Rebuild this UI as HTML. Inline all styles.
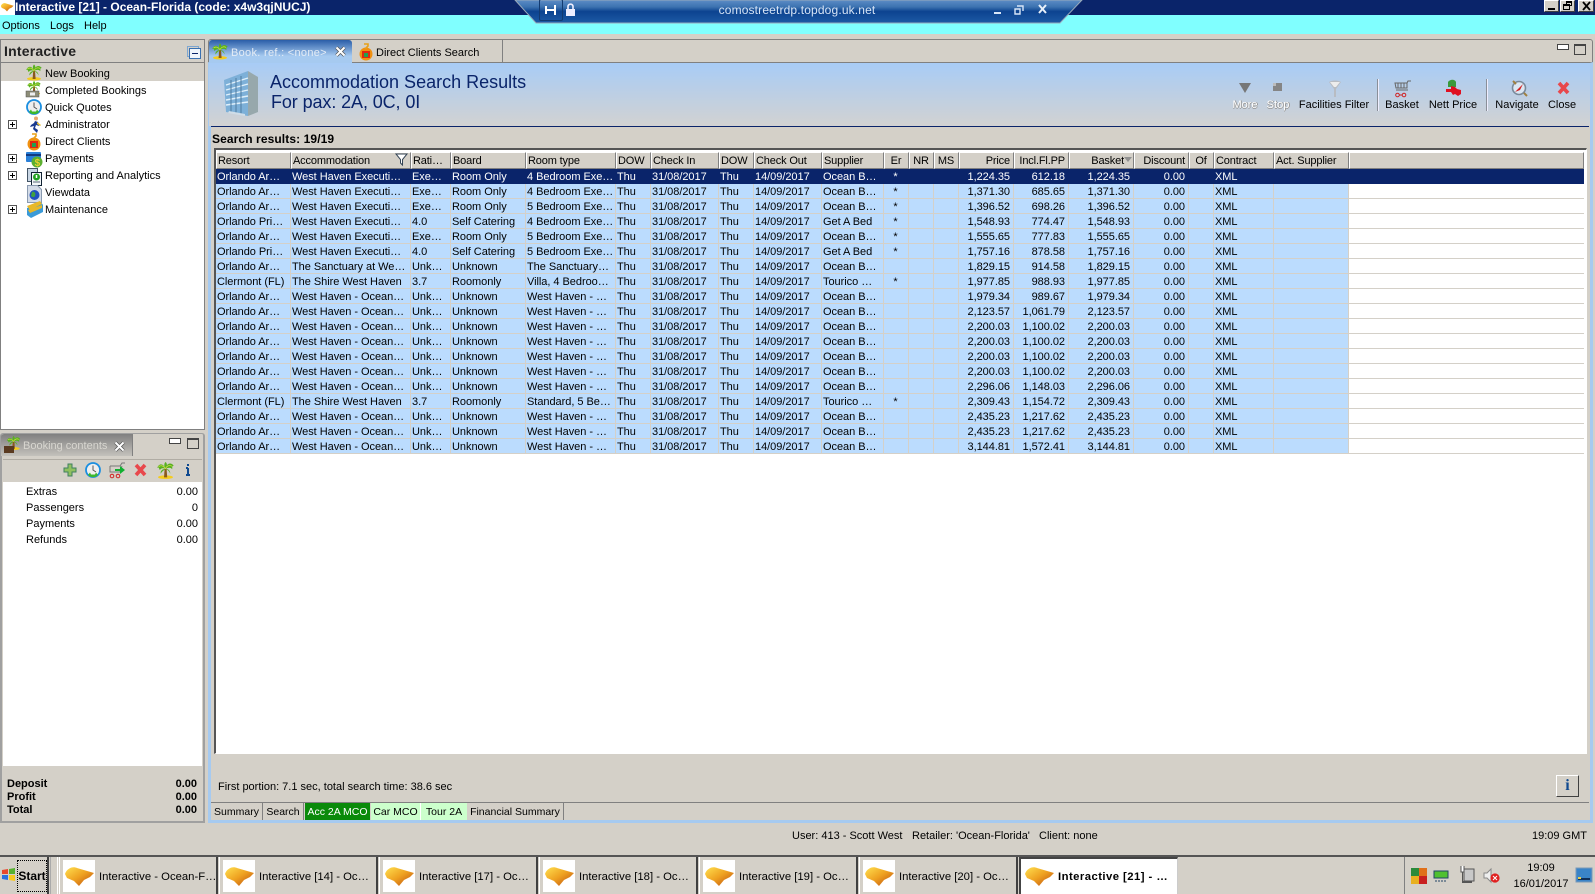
<!DOCTYPE html>
<html lang="en"><head><meta charset="utf-8"><title>Interactive [21] - Ocean-Florida</title>
<style>
html,body{margin:0;padding:0;width:1595px;height:894px;overflow:hidden;background:#d4d0c8}
body{position:relative;font:11px "Liberation Sans",Arial,sans-serif;color:#000}
.a,.t{position:absolute}
.t{white-space:nowrap;line-height:14px}
svg{position:absolute;overflow:visible}
.c{transform:translateX(-50%)}
.r{text-align:right}
table{position:absolute;left:216px;top:152px;border-collapse:separate;border-spacing:0;table-layout:fixed;width:1368px}
th{padding:0 2px 0 1px;background:#d4d0c8;font-weight:normal;text-align:left;border:1px solid;border-color:#fff #808080 #808080 #fff;box-sizing:border-box;height:17px;line-height:14px;overflow:hidden;white-space:nowrap;letter-spacing:-.15px}
td{height:15px;box-sizing:border-box;padding:2px 2px 0 1px;background:#bbdcfe;border-right:1px solid #d4d0c8;border-bottom:1px solid #d4d0c8;line-height:12px;overflow:hidden;white-space:nowrap;letter-spacing:-.04px}
td:last-child{background:#fff;border-right:0}
tr.s td{background:#0a246a!important;color:#fff;border-color:#0a246a}
td:nth-child(n+14):nth-child(-n+17),th:nth-child(n+14):nth-child(-n+17){text-align:right;padding-right:3px}
td:nth-child(11),th:nth-child(11),th:nth-child(12),th:nth-child(13),th:nth-child(18){text-align:center}
.mt{position:absolute;top:803px;height:17px;line-height:18px;text-align:center;border-right:1px solid #808080;box-sizing:border-box;font-size:10.5px}
.tb{position:absolute;top:857px;height:37px;width:159px;background:#d4d0c8;border-right:2px solid #404040;border-left:1px solid #fff;box-sizing:border-box}
.tb .ic{position:absolute;left:3px;top:3px;width:32px;height:32px;background:#fff}
.tb .tx{position:absolute;left:39px;top:13px;line-height:14px;white-space:nowrap;font-size:11.3px}
</style></head><body>
<svg width="0" height="0" style="position:absolute"><defs>
<linearGradient id="gem" x1="0" y1="0" x2="1" y2="1"><stop offset="0" stop-color="#ffe050"/><stop offset=".5" stop-color="#eea020"/><stop offset="1" stop-color="#b84a10"/></linearGradient>
<symbol id="gemi" viewBox="0 0 32 32"><path d="M2 14C4 8 10 6 14 8L31 13 27 17 21 20 16 26 11 21 4 18Z" fill="url(#gem)"/></symbol>
<symbol id="palm" viewBox="0 0 16 16"><ellipse cx="8" cy="14.3" rx="7" ry="1.7" fill="#f4cc20"/><path d="M7.2 6h1.8l.6 8.5H6.6Z" fill="#8a5a1c"/><path d="M8 6.5C6 1 2 1 .2 5.5c2-1 1.5 1 2.5 2C4 5.5 6 5.5 8 6.5ZM8 6.5C9 1 13 0 15.8 3.5c-2 0-1.2 1.5-1.5 3.3C13 5 11 5 8 6.5ZM8 6.5C6.5 4 6.5 1.5 8 0c2 1.5 1.5 4 0 6.5ZM8 6.5C5 6.5 3 8.5 3.5 11c1.5-2.5 3-3 4.5-4.5ZM8 6.5c3 0 4.5 2 4.5 4.5C11.5 8.5 10 7.5 8 6.5Z" fill="#58b020"/><path d="M8 6.5C6 3 3 3 1.5 4.5M8 6.5c1-3 4-4 6-2.5" stroke="#c8e040" stroke-width=".8" fill="none"/></symbol>
<symbol id="clock" viewBox="0 0 16 16"><circle cx="8" cy="8" r="7" fill="#efefef" stroke="#1a8ee0" stroke-width="1.8"/><path d="M8 3.5V8l3 2" stroke="#555" fill="none"/><path d="M3 13a7 7 0 0 0 10 0l-2-2.500-1 2H6L5 10.500Z" fill="#3db82c"/></symbol>
</defs></svg>

<!-- Title bar -->
<div class="a" style="left:0;top:0;width:1595px;height:15px;background:#0a246a"></div>
<div class="a" style="left:0;top:0;width:15px;height:15px;background:#fff"></div>
<svg style="left:0;top:0" width="14" height="14"><use href="#gemi" width="14" height="14"/></svg>
<div class="t" style="left:15px;top:0;color:#fff;font-weight:bold;font-size:12px">Interactive [21] - Ocean-Florida (code: x4w3qjNUCJ)</div>
<div class="a" style="left:0;top:15px;width:1595px;height:19px;background:#80ffff"></div>
<div class="t" style="left:2px;top:19px">Options</div><div class="t" style="left:50px;top:19px">Logs</div><div class="t" style="left:84px;top:19px">Help</div>

<!-- window buttons -->
<div class="a" style="left:1544px;top:0;width:15px;height:12px;background:#d4d0c8;border:1px solid;border-color:#fff #404040 #404040 #fff;box-sizing:border-box"><div class="a" style="left:3px;top:7px;width:7px;height:2px;background:#000"></div></div>
<div class="a" style="left:1560px;top:0;width:15px;height:12px;background:#d4d0c8;border:1px solid;border-color:#fff #404040 #404040 #fff;box-sizing:border-box"><div class="a" style="left:5px;top:0;width:6px;height:5px;border:1px solid #000;border-top-width:2px;box-sizing:border-box"></div><div class="a" style="left:2px;top:3px;width:7px;height:6px;border:1px solid #000;border-top-width:2px;box-sizing:border-box;background:#d4d0c8"></div></div>
<div class="a" style="left:1578px;top:0;width:16px;height:12px;background:#d4d0c8;border:1px solid;border-color:#fff #404040 #404040 #fff;box-sizing:border-box"><svg style="left:3px;top:1px" width="9" height="8"><path d="M1 0L8 8M8 0L1 8" stroke="#000" stroke-width="1.8"/></svg></div>

<!-- RDP bar -->
<svg style="left:512px;top:0" width="572" height="24"><defs><linearGradient id="rdp" x1="0" y1="0" x2="0" y2="1"><stop offset="0" stop-color="#5d8dc6"/><stop offset=".3" stop-color="#3c72b0"/><stop offset=".5" stop-color="#0c4390"/><stop offset="1" stop-color="#1d5aa5"/></linearGradient></defs><path d="M3 0H570L548 23H24Z" fill="url(#rdp)" stroke="#9ab" stroke-width="1"/></svg>
<div class="a" style="left:539px;top:-1px;width:22px;height:20px;border:1px solid #123a70;border-radius:2px"></div>
<svg style="left:539px;top:0" width="60" height="20"><path d="M7 10H16M16 5V15M7 6V14" stroke="#fff" stroke-width="2" fill="none"/><rect x="27" y="9" width="9" height="7" fill="#eef"/><path d="M29 9V6a2.6 2.6 0 0 1 5 0V9" stroke="#eef" stroke-width="1.6" fill="none"/></svg>
<div class="t c" style="left:797px;top:3px;color:#d6e4f6;font-size:12px;letter-spacing:.15px">comostreetrdp.topdog.uk.net</div>
<svg style="left:990px;top:3px" width="66" height="13"><path d="M4 10h7" stroke="#d8e6f8" stroke-width="2"/><path d="M27 3h6v5M25 6h5v5h-5Z" stroke="#d8e6f8" stroke-width="1.4" fill="none"/><path d="M49 2l7 8M56 2l-7 8" stroke="#e8f0fa" stroke-width="2"/></svg>

<!-- Left panel -->
<div class="a" style="left:0;top:39px;width:205px;height:391px;background:#fff;border:1px solid #808080;box-sizing:border-box"></div>
<div class="a" style="left:1px;top:40px;width:203px;height:22px;background:#d4d0c8;border-bottom:1px solid #808080"></div>
<div class="t" style="left:4px;top:43px;font-size:14px;font-weight:bold;color:#222;letter-spacing:.2px;line-height:16px">Interactive</div>
<div class="a" style="left:187px;top:46px;width:10px;height:9px;border:1px solid #7ea6d0"></div>
<div class="a" style="left:189px;top:48px;width:10px;height:9px;border:1px solid #3a70b0;background:#eef4fb"><div class="a" style="left:2px;top:4px;width:6px;height:1px;background:#0a246a"></div></div>
<div class="a" style="left:1px;top:63px;width:203px;height:18px;background:#d4d0c8"></div>
<div class="t" style="left:45px;top:67px">New Booking</div>
<div class="t" style="left:45px;top:84px">Completed Bookings</div>
<div class="t" style="left:45px;top:101px">Quick Quotes</div>
<div class="t" style="left:45px;top:118px">Administrator</div>
<div class="t" style="left:45px;top:135px">Direct Clients</div>
<div class="t" style="left:45px;top:152px">Payments</div>
<div class="t" style="left:45px;top:169px">Reporting and Analytics</div>
<div class="t" style="left:45px;top:186px">Viewdata</div>
<div class="t" style="left:45px;top:203px">Maintenance</div>
<svg style="left:8px;top:120px" width="9" height="94"><g fill="#fff" stroke="#555"><rect x=".5" y=".5" width="8" height="8"/><rect x=".5" y="34.5" width="8" height="8"/><rect x=".5" y="51.5" width="8" height="8"/><rect x=".5" y="85.5" width="8" height="8"/></g><path d="M2 4.5h5M4.5 2v5M2 38.5h5M4.500 36v5M2 55.5h5M4.5 53v5M2 89.5h5M4.5 87v5" stroke="#000"/></svg>
<svg style="left:26px;top:64px" width="16" height="17"><use href="#palm" width="16" height="17"/></svg>
<svg style="left:26px;top:81px" width="16" height="17"><use href="#palm" width="16" height="14"/><rect x="0" y="10" width="13" height="6" fill="#8d8d78" stroke="#555" stroke-width=".5"/><rect x="4" y="11.5" width="5" height="3" fill="#eee"/></svg>
<svg style="left:26px;top:99px" width="16" height="17"><use href="#clock" width="16" height="16"/></svg>
<svg style="left:28px;top:116px" width="14" height="18"><circle cx="8" cy="2.5" r="2" fill="#e8a870"/><path d="M7 5l3 1 1 4-3-1-1 3 3 2-1 3-4-4 1-3-4 1 1-2 3-2Z" fill="#1a3a90"/><path d="M9 6l4 3-1 1-3-2Z" fill="#e8c030"/></svg>
<svg style="left:26px;top:133px" width="16" height="18"><circle cx="8" cy="11" r="6.5" fill="#f09010"/><path d="M4 8h8v7H4Z" fill="#e02810"/><path d="M6 10h4v4H6Z" fill="#20a050"/><path d="M6 1h4v2L8 5V6" stroke="#e8a018" stroke-width="1.6" fill="none"/></svg>
<svg style="left:26px;top:151px" width="17" height="17"><rect x="0" y="1" width="15" height="10" rx="1" fill="#2a80d8"/><rect x="0" y="3" width="15" height="2" fill="#123a80"/><circle cx="11" cy="11" r="5.500" fill="#5cb030"/><text x="8.600" y="15" font-size="10" font-weight="bold" fill="#e8d030" font-family="Liberation Sans">$</text></svg>
<svg style="left:27px;top:168px" width="15" height="18"><rect x=".5" y=".5" width="10" height="13" fill="#c9d6e4" stroke="#456"/><rect x="4.5" y="4.5" width="10" height="13" fill="#f2f6f8" stroke="#123"/><circle cx="9.500" cy="9" r="3.5" fill="#20a020"/><path d="M9.500 7v3" stroke="#fff" stroke-width="1.5"/><path d="M6 14h7" stroke="#567"/></svg>
<svg style="left:27px;top:185px" width="15" height="18"><path d="M.5.5h10l4 4v13H.5Z" fill="#d4dce8" stroke="#8a9ab0"/><circle cx="7.5" cy="10" r="5" fill="#2050c0"/><path d="M5 7c3-1 4 2 3 4s-3 1-4 0Z" fill="#40a040"/></svg>
<svg style="left:27px;top:201px" width="16" height="18"><path d="M0 7L14 1l2 3v7L4 17l-4-3Z" fill="#3a9ad8"/><path d="M0 5L13 0l2 3L3 9ZM1 9L15 4v3L3 12Z" fill="#e8b828"/></svg>

<!-- Booking contents panel -->
<div class="a" style="left:0;top:433px;width:205px;height:390px;border:1px solid #a0a0a0;border-width:1px 2px 2px;box-sizing:border-box;border-radius:3px 3px 0 0"></div>
<div class="a" style="left:1px;top:434px;width:131px;height:22px;background:linear-gradient(#808080,#c4c2bc);border-right:1px solid #808080;border-radius:3px 0 0 0"></div>
<div class="t" style="left:23px;top:439px;color:#d8d6d0">Booking contents</div>
<svg style="left:3px;top:436px" width="18" height="18"><use href="#palm" x="3" width="15" height="14"/><rect x="1" y="10" width="10" height="7" fill="#5a3a20"/></svg>
<svg style="left:114px;top:441px" width="11" height="11"><path d="M1.5 1.5l8 8M9.5 1.5l-8 8" stroke="#555" stroke-width="3.4"/><path d="M1.5 1.5l8 8M9.5 1.5l-8 8" stroke="#fff" stroke-width="2"/></svg>
<div class="a" style="left:169px;top:438px;width:10px;height:4px;border:1px solid #444;background:#fff"></div>
<div class="a" style="left:187px;top:438px;width:10px;height:8px;border:1px solid #444;border-top-width:2px"></div>
<div class="a" style="left:3px;top:459px;width:199px;height:23px;background:#d4d0c8;border-top:1px solid #b0aca4"></div>
<div class="a" style="left:3px;top:482px;width:199px;height:284px;background:#fff"></div>
<svg style="left:63px;top:462px" width="145" height="18"><path d="M5 1h4v4h4v4H9v4H5V9H1V5h4Z" fill="#90c060" stroke="#408060" transform="translate(0 1)"/><use href="#clock" x="22" y="0" width="16" height="16"/><path d="M47 4h10l2-3h3M47 4v6h10l2-6" stroke="#777" fill="none"/><circle cx="49" cy="14" r="1.800" fill="none" stroke="#d02020"/><circle cx="55" cy="14" r="1.8" fill="none" stroke="#d02020"/><path d="M52 7h5V4l5 4-5 4V9h-5Z" fill="#10b030"/><path d="M73 3l9 10M82 3l-9 10" stroke="#e8484c" stroke-width="3.6"/><use href="#palm" x="94" y="0" width="17" height="17"/><path d="M125 2v2M125 6v7M123 13h4M123 6h2" stroke="#104a90" stroke-width="2" fill="none"/></svg>
<div class="t" style="left:26px;top:485px">Extras</div><div class="t r" style="right:1397px;top:485px">0.00</div>
<div class="t" style="left:26px;top:501px">Passengers</div><div class="t r" style="right:1397px;top:501px">0</div>
<div class="t" style="left:26px;top:517px">Payments</div><div class="t r" style="right:1397px;top:517px">0.00</div>
<div class="t" style="left:26px;top:533px">Refunds</div><div class="t r" style="right:1397px;top:533px">0.00</div>
<div class="t" style="left:7px;top:777px;font-weight:bold">Deposit</div><div class="t" style="right:1398px;top:777px;font-weight:bold">0.00</div>
<div class="t" style="left:7px;top:790px;font-weight:bold">Profit</div><div class="t" style="right:1398px;top:790px;font-weight:bold">0.00</div>
<div class="t" style="left:7px;top:803px;font-weight:bold">Total</div><div class="t" style="right:1398px;top:803px;font-weight:bold">0.00</div>

<!-- Right panel -->
<div class="a" style="left:208px;top:39px;width:1385px;height:24px;border:1px solid #808080;border-radius:3px 3px 0 0;box-sizing:border-box;background:#d4d0c8"></div>
<div class="a" style="left:208px;top:62px;width:1385px;height:761px;border:3px solid #a6caf0;border-top:1px solid #808080;box-sizing:border-box"></div>
<div class="a" style="left:209px;top:40px;width:143px;height:23px;background:linear-gradient(#2a5ea8,#a6caf0 70%);border-radius:3px 3px 0 0"></div>
<div class="a" style="left:352px;top:40px;width:150px;height:22px;border-right:1px solid #808080"></div>
<svg style="left:212px;top:43px" width="16" height="17"><use href="#palm" width="16" height="17"/></svg>
<div class="t" style="left:231px;top:46px;color:#e4ecf6;letter-spacing:.3px">Book. ref.: &lt;none&gt;</div>
<svg style="left:335px;top:46px" width="11" height="11"><path d="M1.5 1.5l8 8M9.5 1.5l-8 8" stroke="#555" stroke-width="3.4"/><path d="M1.5 1.5l8 8M9.5 1.5l-8 8" stroke="#fff" stroke-width="2"/></svg>
<svg style="left:358px;top:43px" width="16" height="18"><circle cx="8" cy="11" r="6.5" fill="#f09010"/><path d="M4 8h8v7H4Z" fill="#e02810"/><path d="M6 10h4v4H6Z" fill="#20a050"/><path d="M6 1h4v2L8 5V6" stroke="#e8a018" stroke-width="1.6" fill="none"/></svg>
<div class="t" style="left:376px;top:46px">Direct Clients Search</div>
<div class="a" style="left:1557px;top:44px;width:10px;height:4px;border:1px solid #444;background:#fff"></div>
<div class="a" style="left:1574px;top:44px;width:10px;height:8px;border:1px solid #444;border-top-width:2px"></div>

<div class="a" style="left:209px;top:63px;width:1381px;height:63px;background:linear-gradient(#a8ccf6,#d2d2d2)"></div>
<div class="a" style="left:211px;top:126px;width:1378px;height:1px;background:#0a246a"></div>
<svg style="left:224px;top:70px" width="36" height="48"><path d="M0 10L24 1V46L2 42Z" fill="#7db0d8"/><path d="M24 1l10 6V42L24 46Z" fill="#97a8ac"/><g stroke="#dff0fb" stroke-width="1.4"><path d="M2 15L24 8M2 20L24 14M2 25L24 20M2 30L24 26M2 35L24 32"/></g><g stroke="#4f7ca0"><path d="M7 10V42M12 8V43M17 6V44"/></g><path d="M5 41l16 3v2L4 43Z" fill="#cfdde8"/></svg>
<div class="t" style="left:270px;top:72px;font-size:18px;line-height:20px;color:#0a246a">Accommodation Search Results</div>
<div class="t" style="left:271px;top:92px;font-size:18px;line-height:20px;color:#0a246a;letter-spacing:-.1px">For pax: 2A, 0C, 0I</div>

<!-- Toolbar -->
<svg style="left:1238px;top:81px" width="16" height="14"><path d="M1 2h12L7 12Z" fill="#777"/></svg>
<svg style="left:1273px;top:83px" width="10" height="10"><rect width="9" height="8" fill="#858585"/><rect x="0" y="0" width="3" height="3" fill="#bbb"/></svg>
<svg style="left:1329px;top:80px" width="14" height="18"><path d="M0 2c3-2 9-2 12 0L7 9v8H5V9Z" fill="#b8bcc2"/><path d="M1 2h10L7 7H5Z" fill="#ececec"/></svg>
<svg style="left:1394px;top:80px" width="18" height="18"><path d="M1 3h12v5H2ZM13 3l1-2h3" stroke="#666" fill="none"/><path d="M4 3v5M7 3v5M10 3v5" stroke="#666"/><path d="M2 10h12" stroke="#666"/><circle cx="3.5" cy="15" r="1.8" fill="none" stroke="#d02020"/><circle cx="10" cy="15" r="1.8" fill="none" stroke="#d02020"/><path d="M5 15h3" stroke="#d02020"/></svg>
<svg style="left:1445px;top:80px" width="17" height="17"><path d="M3 2c2-3 7-3 8 0v5H3Z" fill="#3a9a3a"/><path d="M1 9h5v-3l4 1 2 2 4 1v4l-3 2-3-2-2 1-2-3H1Z" fill="#e01020"/></svg>
<svg style="left:1510px;top:79px" width="18" height="18"><circle cx="9" cy="9" r="6.500" fill="#dce8f4" stroke="#7a8a9a" stroke-width="1.600"/><path d="M3 2l3 3M14 14l3 3" stroke="#a08040" stroke-width="2"/><path d="M5 13l8-8-3 6Z" fill="#d02020"/></svg>
<svg style="left:1557px;top:81px" width="13" height="14"><path d="M2 2l9 10M11 2L2 12" stroke="#e8484c" stroke-width="3.6"/></svg>
<div class="t c" style="left:1245px;top:98px;color:#fff;text-shadow:0 1px 0 #999,1px 0 0 #999">More</div>
<div class="t c" style="left:1278px;top:98px;color:#fff;text-shadow:0 1px 0 #999,1px 0 0 #999">Stop</div>
<div class="t c" style="left:1334px;top:98px">Facilities Filter</div>
<div class="a" style="left:1377px;top:79px;width:1px;height:32px;background:#8a8f98;border-right:1px solid #eef"></div>
<div class="t c" style="left:1402px;top:98px">Basket</div>
<div class="t c" style="left:1453px;top:98px">Nett Price</div>
<div class="a" style="left:1486px;top:79px;width:1px;height:32px;background:#8a8f98;border-right:1px solid #eef"></div>
<div class="t c" style="left:1517px;top:98px">Navigate</div>
<div class="t c" style="left:1562px;top:98px">Close</div>

<div class="t" style="left:212px;top:132px;font-weight:bold;font-size:12px;letter-spacing:.1px">Search results: 19/19</div>

<!-- Table -->
<div class="a" style="left:214px;top:148px;width:1373px;height:606px;background:#fff;border-top:2px solid #555;border-left:2px solid #555;border-right:1px solid #fff;border-bottom:1px solid #fff;box-sizing:border-box"></div>
<table>
<colgroup><col style="width:75px"><col style="width:120px"><col style="width:40px"><col style="width:75px"><col style="width:90px"><col style="width:35px"><col style="width:68px"><col style="width:35px"><col style="width:68px"><col style="width:62px"><col style="width:25px"><col style="width:25px"><col style="width:25px"><col style="width:55px"><col style="width:55px"><col style="width:65px"><col style="width:55px"><col style="width:25px"><col style="width:60px"><col style="width:75px"><col></colgroup>
<tr><th>Resort</th><th>Accommodation</th><th>Rati…</th><th>Board</th><th>Room type</th><th>DOW</th><th>Check In</th><th>DOW</th><th>Check Out</th><th>Supplier</th><th>Er</th><th>NR</th><th>MS</th><th>Price</th><th>Incl.Fl.PP</th><th style="padding-right:9px">Basket</th><th>Discount</th><th>Of</th><th>Contract</th><th>Act. Supplier</th><th></th></tr>
<tr class="s"><td>Orlando Ar…</td><td>West Haven Executi…</td><td>Exe…</td><td>Room Only</td><td>4 Bedroom Exe…</td><td>Thu</td><td>31/08/2017</td><td>Thu</td><td>14/09/2017</td><td>Ocean B…</td><td>*</td><td></td><td></td><td>1,224.35</td><td>612.18</td><td>1,224.35</td><td>0.00</td><td></td><td>XML</td><td></td><td></td></tr>
<tr><td>Orlando Ar…</td><td>West Haven Executi…</td><td>Exe…</td><td>Room Only</td><td>4 Bedroom Exe…</td><td>Thu</td><td>31/08/2017</td><td>Thu</td><td>14/09/2017</td><td>Ocean B…</td><td>*</td><td></td><td></td><td>1,371.30</td><td>685.65</td><td>1,371.30</td><td>0.00</td><td></td><td>XML</td><td></td><td></td></tr>
<tr><td>Orlando Ar…</td><td>West Haven Executi…</td><td>Exe…</td><td>Room Only</td><td>5 Bedroom Exe…</td><td>Thu</td><td>31/08/2017</td><td>Thu</td><td>14/09/2017</td><td>Ocean B…</td><td>*</td><td></td><td></td><td>1,396.52</td><td>698.26</td><td>1,396.52</td><td>0.00</td><td></td><td>XML</td><td></td><td></td></tr>
<tr><td>Orlando Pri…</td><td>West Haven Executi…</td><td>4.0</td><td>Self Catering</td><td>4 Bedroom Exe…</td><td>Thu</td><td>31/08/2017</td><td>Thu</td><td>14/09/2017</td><td>Get A Bed</td><td>*</td><td></td><td></td><td>1,548.93</td><td>774.47</td><td>1,548.93</td><td>0.00</td><td></td><td>XML</td><td></td><td></td></tr>
<tr><td>Orlando Ar…</td><td>West Haven Executi…</td><td>Exe…</td><td>Room Only</td><td>5 Bedroom Exe…</td><td>Thu</td><td>31/08/2017</td><td>Thu</td><td>14/09/2017</td><td>Ocean B…</td><td>*</td><td></td><td></td><td>1,555.65</td><td>777.83</td><td>1,555.65</td><td>0.00</td><td></td><td>XML</td><td></td><td></td></tr>
<tr><td>Orlando Pri…</td><td>West Haven Executi…</td><td>4.0</td><td>Self Catering</td><td>5 Bedroom Exe…</td><td>Thu</td><td>31/08/2017</td><td>Thu</td><td>14/09/2017</td><td>Get A Bed</td><td>*</td><td></td><td></td><td>1,757.16</td><td>878.58</td><td>1,757.16</td><td>0.00</td><td></td><td>XML</td><td></td><td></td></tr>
<tr><td>Orlando Ar…</td><td>The Sanctuary at We…</td><td>Unk…</td><td>Unknown</td><td>The Sanctuary…</td><td>Thu</td><td>31/08/2017</td><td>Thu</td><td>14/09/2017</td><td>Ocean B…</td><td></td><td></td><td></td><td>1,829.15</td><td>914.58</td><td>1,829.15</td><td>0.00</td><td></td><td>XML</td><td></td><td></td></tr>
<tr><td>Clermont (FL)</td><td>The Shire West Haven</td><td>3.7</td><td>Roomonly</td><td>Villa, 4 Bedroo…</td><td>Thu</td><td>31/08/2017</td><td>Thu</td><td>14/09/2017</td><td>Tourico …</td><td>*</td><td></td><td></td><td>1,977.85</td><td>988.93</td><td>1,977.85</td><td>0.00</td><td></td><td>XML</td><td></td><td></td></tr>
<tr><td>Orlando Ar…</td><td>West Haven - Ocean…</td><td>Unk…</td><td>Unknown</td><td>West Haven - …</td><td>Thu</td><td>31/08/2017</td><td>Thu</td><td>14/09/2017</td><td>Ocean B…</td><td></td><td></td><td></td><td>1,979.34</td><td>989.67</td><td>1,979.34</td><td>0.00</td><td></td><td>XML</td><td></td><td></td></tr>
<tr><td>Orlando Ar…</td><td>West Haven - Ocean…</td><td>Unk…</td><td>Unknown</td><td>West Haven - …</td><td>Thu</td><td>31/08/2017</td><td>Thu</td><td>14/09/2017</td><td>Ocean B…</td><td></td><td></td><td></td><td>2,123.57</td><td>1,061.79</td><td>2,123.57</td><td>0.00</td><td></td><td>XML</td><td></td><td></td></tr>
<tr><td>Orlando Ar…</td><td>West Haven - Ocean…</td><td>Unk…</td><td>Unknown</td><td>West Haven - …</td><td>Thu</td><td>31/08/2017</td><td>Thu</td><td>14/09/2017</td><td>Ocean B…</td><td></td><td></td><td></td><td>2,200.03</td><td>1,100.02</td><td>2,200.03</td><td>0.00</td><td></td><td>XML</td><td></td><td></td></tr>
<tr><td>Orlando Ar…</td><td>West Haven - Ocean…</td><td>Unk…</td><td>Unknown</td><td>West Haven - …</td><td>Thu</td><td>31/08/2017</td><td>Thu</td><td>14/09/2017</td><td>Ocean B…</td><td></td><td></td><td></td><td>2,200.03</td><td>1,100.02</td><td>2,200.03</td><td>0.00</td><td></td><td>XML</td><td></td><td></td></tr>
<tr><td>Orlando Ar…</td><td>West Haven - Ocean…</td><td>Unk…</td><td>Unknown</td><td>West Haven - …</td><td>Thu</td><td>31/08/2017</td><td>Thu</td><td>14/09/2017</td><td>Ocean B…</td><td></td><td></td><td></td><td>2,200.03</td><td>1,100.02</td><td>2,200.03</td><td>0.00</td><td></td><td>XML</td><td></td><td></td></tr>
<tr><td>Orlando Ar…</td><td>West Haven - Ocean…</td><td>Unk…</td><td>Unknown</td><td>West Haven - …</td><td>Thu</td><td>31/08/2017</td><td>Thu</td><td>14/09/2017</td><td>Ocean B…</td><td></td><td></td><td></td><td>2,200.03</td><td>1,100.02</td><td>2,200.03</td><td>0.00</td><td></td><td>XML</td><td></td><td></td></tr>
<tr><td>Orlando Ar…</td><td>West Haven - Ocean…</td><td>Unk…</td><td>Unknown</td><td>West Haven - …</td><td>Thu</td><td>31/08/2017</td><td>Thu</td><td>14/09/2017</td><td>Ocean B…</td><td></td><td></td><td></td><td>2,296.06</td><td>1,148.03</td><td>2,296.06</td><td>0.00</td><td></td><td>XML</td><td></td><td></td></tr>
<tr><td>Clermont (FL)</td><td>The Shire West Haven</td><td>3.7</td><td>Roomonly</td><td>Standard, 5 Be…</td><td>Thu</td><td>31/08/2017</td><td>Thu</td><td>14/09/2017</td><td>Tourico …</td><td>*</td><td></td><td></td><td>2,309.43</td><td>1,154.72</td><td>2,309.43</td><td>0.00</td><td></td><td>XML</td><td></td><td></td></tr>
<tr><td>Orlando Ar…</td><td>West Haven - Ocean…</td><td>Unk…</td><td>Unknown</td><td>West Haven - …</td><td>Thu</td><td>31/08/2017</td><td>Thu</td><td>14/09/2017</td><td>Ocean B…</td><td></td><td></td><td></td><td>2,435.23</td><td>1,217.62</td><td>2,435.23</td><td>0.00</td><td></td><td>XML</td><td></td><td></td></tr>
<tr><td>Orlando Ar…</td><td>West Haven - Ocean…</td><td>Unk…</td><td>Unknown</td><td>West Haven - …</td><td>Thu</td><td>31/08/2017</td><td>Thu</td><td>14/09/2017</td><td>Ocean B…</td><td></td><td></td><td></td><td>2,435.23</td><td>1,217.62</td><td>2,435.23</td><td>0.00</td><td></td><td>XML</td><td></td><td></td></tr>
<tr><td>Orlando Ar…</td><td>West Haven - Ocean…</td><td>Unk…</td><td>Unknown</td><td>West Haven - …</td><td>Thu</td><td>31/08/2017</td><td>Thu</td><td>14/09/2017</td><td>Ocean B…</td><td></td><td></td><td></td><td>3,144.81</td><td>1,572.41</td><td>3,144.81</td><td>0.00</td><td></td><td>XML</td><td></td><td></td></tr>
</table>
<svg style="left:395px;top:153px" width="14" height="13"><path d="M1 1h11L7.5 6.5V12L5.5 10V6.5Z" fill="#fff" stroke="#345"/></svg>
<svg style="left:1124px;top:157px" width="9" height="6"><path d="M0 0h8L4 5Z" fill="#909090"/></svg>

<!-- Footer -->
<div class="t" style="left:218px;top:780px">First portion: 7.1 sec, total search time: 38.6 sec</div>
<div class="a" style="left:1556px;top:775px;width:23px;height:22px;box-sizing:border-box;border:1px solid;border-color:#fff #404040 #404040 #fff;text-align:center;font:bold 16px/20px 'Liberation Serif',serif;color:#104a90">i</div>
<div class="a" style="left:211px;top:802px;width:1378px;height:1px;background:#808080"></div>
<div class="mt" style="left:211px;width:52px">Summary</div>
<div class="mt" style="left:263px;width:41px">Search</div>
<div class="mt" style="left:305px;width:65px;background:#0a8a0a;color:#fff;border:0">Acc 2A MCO</div>
<div class="mt" style="left:371px;width:50px;background:#ccffcc;border-right:1px solid #fff">Car MCO</div>
<div class="mt" style="left:421px;width:46px;background:#ccffcc;border:0">Tour 2A</div>
<div class="mt" style="left:467px;width:97px">Financial Summary</div>

<!-- Status -->
<div class="t" style="left:792px;top:829px">User: 413 - Scott West</div>
<div class="t" style="left:912px;top:829px">Retailer: 'Ocean-Florida'</div>
<div class="t" style="left:1039px;top:829px">Client: none</div>
<div class="t" style="right:8px;top:829px">19:09 GMT</div>

<!-- Taskbar -->
<div class="a" style="left:0;top:855px;width:1595px;height:2px;background:#555"></div>
<div class="a" style="left:0;top:857px;width:49px;height:37px;border-right:2px solid #404040;box-sizing:border-box"></div>
<svg style="left:1px;top:867px" width="15" height="15"><path d="M1 3l6-1v5H1Z" fill="#e8482c"/><path d="M8 2l6-1v6H8Z" fill="#58b030"/><path d="M1 8h6v5l-6-1Z" fill="#2a70e0"/><path d="M8 8h6v6l-6-1Z" fill="#f8c820"/></svg>
<div class="a" style="left:17px;top:860px;width:30px;height:32px;border:1px dotted #000;box-sizing:border-box;font:bold 12px/30px 'Liberation Sans',sans-serif;text-align:center">Start</div>
<div class="a" style="left:50px;top:857px;width:8px;height:37px;border-right:1px solid #fff;border-left:1px solid #aaa;box-sizing:border-box"></div>
<div class="tb" style="left:59px"><div class="ic"><svg width="32" height="32"><use href="#gemi" width="32" height="32"/></svg></div><div class="tx">Interactive - Ocean-F…</div></div>
<div class="tb" style="left:219px"><div class="ic"><svg width="32" height="32"><use href="#gemi" width="32" height="32"/></svg></div><div class="tx">Interactive [14] - Oc…</div></div>
<div class="tb" style="left:379px"><div class="ic"><svg width="32" height="32"><use href="#gemi" width="32" height="32"/></svg></div><div class="tx">Interactive [17] - Oc…</div></div>
<div class="tb" style="left:539px"><div class="ic"><svg width="32" height="32"><use href="#gemi" width="32" height="32"/></svg></div><div class="tx">Interactive [18] - Oc…</div></div>
<div class="tb" style="left:699px"><div class="ic"><svg width="32" height="32"><use href="#gemi" width="32" height="32"/></svg></div><div class="tx">Interactive [19] - Oc…</div></div>
<div class="tb" style="left:859px"><div class="ic"><svg width="32" height="32"><use href="#gemi" width="32" height="32"/></svg></div><div class="tx">Interactive [20] - Oc…</div></div>
<div class="tb" style="left:1019px;background:#fff;border-left:2px solid #444;border-top:2px solid #444;border-right:1px solid #ccc"><div class="ic" style="left:2px;top:1px"><svg width="32" height="32"><use href="#gemi" width="32" height="32"/></svg></div><div class="tx" style="left:37px;top:11px;font-weight:bold;letter-spacing:.45px">Interactive [21] - …</div></div>
<div class="a" style="left:1404px;top:857px;width:191px;height:37px;border-left:1px solid #808080;box-sizing:border-box"></div>
<svg style="left:1411px;top:868px" width="16" height="17"><rect width="8" height="8" fill="#2a8a3a"/><rect x="8" width="8" height="8" fill="#e0701a"/><rect y="8" width="8" height="8" fill="#e8b020"/><rect x="8" y="8" width="8" height="8" fill="#c82020"/></svg>
<svg style="left:1434px;top:870px" width="16" height="12"><rect y="1" width="14" height="7" fill="#50c030" stroke="#246"/><path d="M2 10v2M5 10v2M8 10v2M11 10v2" stroke="#246"/></svg>
<svg style="left:1459px;top:866px" width="16" height="19"><rect x="5" y="3" width="10" height="12" fill="#c8c8c8" stroke="#555"/><path d="M2 0v6h3V0M3.500 6v10" stroke="#555" fill="#fff"/><path d="M3 16h10" stroke="#555" stroke-width="2"/></svg>
<svg style="left:1483px;top:868px" width="17" height="16"><path d="M1 5h3l4-4v13L4 10H1Z" fill="#eee" stroke="#888"/><circle cx="12" cy="10" r="4.600" fill="#e02020"/><path d="M10 8l4 4M14 8l-4 4" stroke="#fff"/></svg>
<div class="t c" style="left:1541px;top:861px">19:09</div>
<div class="t c" style="left:1541px;top:877px">16/01/2017</div>
<svg style="left:1576px;top:868px" width="17" height="15"><rect width="16" height="14" fill="#3a84c8" stroke="#7a9ab8"/><rect x="2" y="10" width="12" height="2" fill="#10305a"/><rect x="2" y="9" width="3" height="2" fill="#e8d050"/></svg>
</body></html>
